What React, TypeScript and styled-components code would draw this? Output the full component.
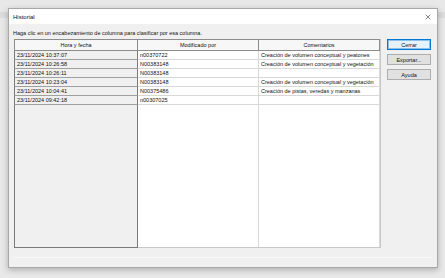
import React from 'react';
import styled, { createGlobalStyle } from 'styled-components';

const GlobalStyle = createGlobalStyle`
  html, body {
    margin: 0;
    padding: 0;
    width: 445px;
    height: 278px;
    overflow: hidden;
    background: #e8e8e8;
    font-family: 'Liberation Sans', Arial, sans-serif;
    color: #111111;
  }
`;

const Screen = styled.div`
  position: relative;
  width: 445px;
  height: 278px;
  padding: 8px 7px 0 8px;
  box-sizing: border-box;
`;

const BackStrip = styled.div`
  position: absolute;
  left: 0;
  right: 0;
  top: 12px;
  height: 6px;
  background: #dcdcdc;
`;

const Dialog = styled.div`
  position: relative;
  width: 430px;
  height: 260px;
  box-sizing: border-box;
  border: 1px solid #a8a8a8;
  background: #f0f0f0;
  box-shadow: 0 2px 6px rgba(0, 0, 0, 0.25);
  display: flex;
  flex-direction: column;
`;

const TitleBar = styled.div`
  height: 15px;
  background: #ffffff;
  display: flex;
  align-items: center;
  justify-content: space-between;
  padding: 0 4px 0 4px;
  font-size: 6px;
`;

const CloseGlyph = styled.svg`
  width: 6px;
  height: 6px;
  margin-right: 2px;
`;

const Body = styled.div`
  flex: 1;
  display: flex;
  flex-direction: column;
  padding: 2px 5px 0 4px;
`;

const Hint = styled.div`
  font-size: 5.5px;
  line-height: 14px;
  height: 13px;
`;

const Content = styled.div`
  display: flex;
  gap: 6px;
  height: 209px;
  padding-left: 1px;
`;

const Grid = styled.div`
  width: 367px;
  display: grid;
  grid-template-columns: 123px 121px 1fr;
  grid-template-rows: 11px repeat(6, 9px) 1fr;
  background: #ffffff;
  border: 1px solid #c8c8c8;
  box-sizing: border-box;
  font-size: 5.5px;
`;

const HeadCell = styled.div<{ $first?: boolean }>`
  display: flex;
  align-items: center;
  justify-content: center;
  background: #f7f7f7;
  border-right: 1px solid #8c8c8c;
  border-bottom: 1px solid #8c8c8c;
  border-left: ${p => (p.$first ? '1px solid #8c8c8c' : 'none')};
  border-top: 1px solid #8c8c8c;
  margin: -1px 0 0 ${p => (p.$first ? '-1px' : '0')};
`;

const Cell = styled.div<{ $first?: boolean }>`
  display: flex;
  align-items: center;
  padding-left: 2px;
  white-space: nowrap;
  overflow: hidden;
  line-height: 8px;
  background: ${p => (p.$first ? '#f0f0f0' : '#ffffff')};
  border-bottom: 1px solid ${p => (p.$first ? '#a0a0a0' : '#d8d8d8')};
  border-right: 1px solid ${p => (p.$first ? '#7a7a7a' : '#d8d8d8')};
  border-left: ${p => (p.$first ? '1px solid #7a7a7a' : 'none')};
  margin-left: ${p => (p.$first ? '-1px' : '0')};
`;

const Filler = styled.div<{ $first?: boolean }>`
  background: ${p => (p.$first ? '#f0f0f0' : '#ffffff')};
  border-right: 1px solid ${p => (p.$first ? '#7a7a7a' : '#d8d8d8')};
  border-left: ${p => (p.$first ? '1px solid #7a7a7a' : 'none')};
  border-bottom: ${p => (p.$first ? '1px solid #7a7a7a' : 'none')};
  margin-left: ${p => (p.$first ? '-1px' : '0')};
  margin-bottom: ${p => (p.$first ? '-1px' : '0')};
`;

const Buttons = styled.div`
  display: flex;
  flex-direction: column;
  gap: 4px;
`;

const Button = styled.div<{ $primary?: boolean }>`
  width: 44px;
  height: 11px;
  box-sizing: border-box;
  display: flex;
  align-items: center;
  justify-content: center;
  font-size: 5.5px;
  background: ${p => (p.$primary ? '#e5f1fb' : '#e1e1e1')};
  border: 1px solid ${p => (p.$primary ? '#0078d7' : '#adadad')};
  box-shadow: ${p => (p.$primary ? 'inset 0 0 0 1px #8cc0ea' : 'none')};
`;

const Footer = styled.div`
  flex: 1;
  border-top: 1px solid #f8f8f8;
  margin-top: 9px;
`;

const rows = [
  ['23/11/2024 10:37:07', 'n00370722', 'Creación de volumen conceptual y peatones'],
  ['23/11/2024 10:26:58', 'N00383148', 'Creación de volumen conceptual y vegetación'],
  ['23/11/2024 10:26:11', 'N00383148', ''],
  ['23/11/2024 10:23:04', 'N00383148', 'Creación de volumen conceptual y vegetación'],
  ['23/11/2024 10:04:41', 'N00375486', 'Creación de pistas, veredas y manzanas'],
  ['23/11/2024 09:42:18', 'n00307025', ''],
];

export default function App() {
  return (
    <>
      <GlobalStyle />
      <Screen>
        <BackStrip />
        <Dialog>
          <TitleBar>
            <span>Historial</span>
            <CloseGlyph viewBox="0 0 10 10">
              <path d="M1 1 L9 9 M9 1 L1 9" stroke="#333" strokeWidth="1" />
            </CloseGlyph>
          </TitleBar>
          <Body>
            <Hint>Haga clic en un encabezamiento de columna para clasificar por esa columna.</Hint>
            <Content>
              <Grid>
                <HeadCell $first>Hora y fecha</HeadCell>
                <HeadCell>Modificado por</HeadCell>
                <HeadCell>Comentarios</HeadCell>
                {rows.map((r, i) => (
                  <React.Fragment key={i}>
                    <Cell $first>{r[0]}</Cell>
                    <Cell>{r[1]}</Cell>
                    <Cell>{r[2]}</Cell>
                  </React.Fragment>
                ))}
                <Filler $first />
                <Filler />
                <Filler />
              </Grid>
              <Buttons>
                <Button $primary>Cerrar</Button>
                <Button>Exportar...</Button>
                <Button>Ayuda</Button>
              </Buttons>
            </Content>
            <Footer />
          </Body>
        </Dialog>
      </Screen>
    </>
  );
}
